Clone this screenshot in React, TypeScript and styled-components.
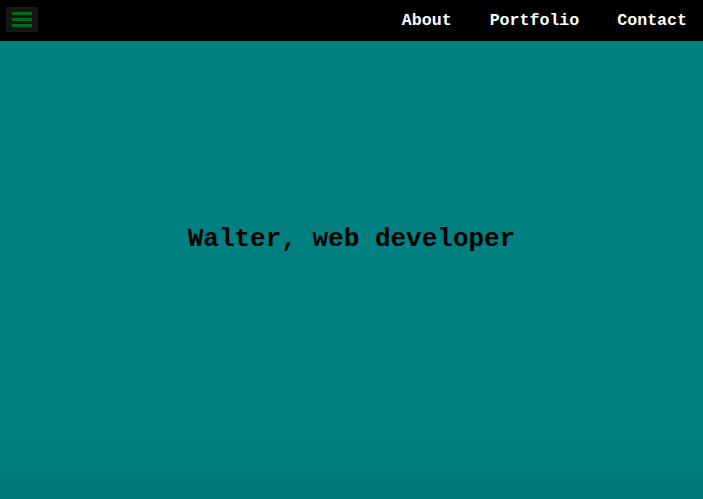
import React from "react";
import styled, { createGlobalStyle } from "styled-components";

const Global = createGlobalStyle`
  html, body { margin: 0; padding: 0; height: 100%; }
  body { background: #008080; font-family: "Liberation Mono", "Courier New", monospace; overflow: hidden; }
  #root { height: 100%; }
`;

const Page = styled.div`
  display: flex;
  flex-direction: column;
  height: 499px;
  background: #008080;
  position: relative;
  overflow: hidden;
`;

const Header = styled.header`
  display: flex;
  align-items: center;
  justify-content: space-between;
  height: 41px;
  background: #000;
  padding: 0 16px 0 6px;
  box-sizing: border-box;
  flex-shrink: 0;
`;

const MenuButton = styled.button`
  width: 32px;
  height: 25px;
  margin-top: -3px;
  background: #161616;
  border: none;
  padding: 0;
  display: flex;
  flex-direction: column;
  align-items: center;
  justify-content: center;
  gap: 3px;
  cursor: pointer;
`;

const Bar = styled.span`
  display: block;
  width: 20px;
  height: 3px;
  background: #006a16;
`;

const Nav = styled.nav`
  display: flex;
  gap: 38px;
  margin-top: -1px;
`;

const NavLink = styled.a`
  color: #fff;
  font-weight: bold;
  font-size: 16.6px;
  text-decoration: none;
  font-family: "Liberation Mono", "Courier New", monospace;
`;

const Main = styled.main`
  flex: 1;
  display: flex;
  justify-content: center;
  padding-top: 183px;
  box-sizing: border-box;
  background: linear-gradient(to bottom, rgba(0,0,0,0) 85%, rgba(0,0,0,0.06) 100%);
`;

const Title = styled.h1`
  margin: 0;
  font-size: 26px;
  font-weight: bold;
  color: #000;
  font-family: "Liberation Mono", "Courier New", monospace;
  height: 30px;
`;

export default function App() {
  return (
    <Page>
      <Global />
      <Header>
        <MenuButton aria-label="menu">
          <Bar />
          <Bar />
          <Bar />
        </MenuButton>
        <Nav>
          <NavLink href="#">About</NavLink>
          <NavLink href="#">Portfolio</NavLink>
          <NavLink href="#">Contact</NavLink>
        </Nav>
      </Header>
      <Main>
        <Title>Walter, web developer</Title>
      </Main>
    </Page>
  );
}
